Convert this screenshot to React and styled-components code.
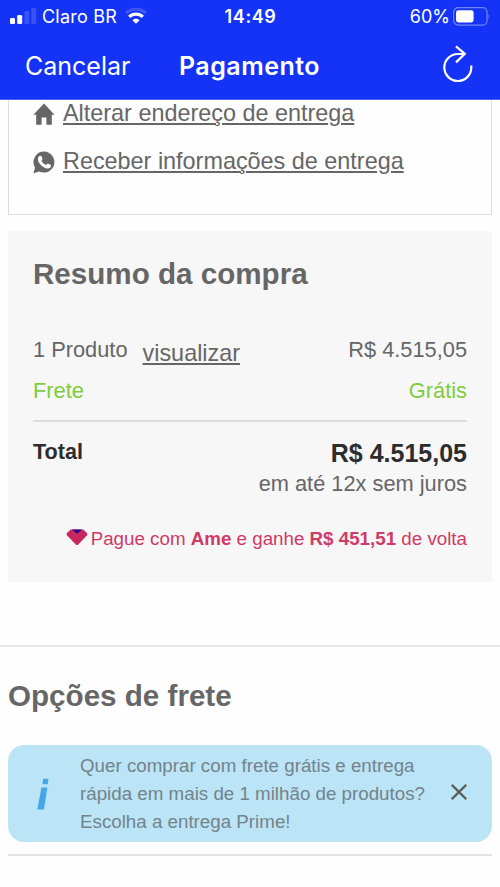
import React from 'react';
import styled, { createGlobalStyle } from 'styled-components';

const GlobalStyle = createGlobalStyle`
  * {
    box-sizing: border-box;
  }

  body {
    margin: 0;
    background: #fff;
    font-family: 'Liberation Sans', Arial, sans-serif;
    color: #666;
  }

  h2, p {
    margin: 0;
  }
`;

const SignalIcon = () => (
  <svg width="27" height="17" viewBox="0 0 27 17" fill="#fff">
    <rect x="0" y="10" width="5" height="6" rx="1.2" />
    <rect x="7.2" y="7" width="5" height="9" rx="1.2" />
    <rect x="14.4" y="3" width="4.8" height="13" rx="1.2" opacity="0.16" />
    <rect x="21.4" y="0" width="4.8" height="16" rx="1.2" opacity="0.16" />
  </svg>
);

const WifiIcon = () => (
  <svg width="24" height="18" viewBox="0 0 24 18" fill="none" stroke="#fff">
    <path d="M2 6.2 A14.4 14.4 0 0 1 22 6.2" strokeWidth="3" opacity="0.18" />
    <path d="M5.2 9.8 A9.8 9.8 0 0 1 18.8 9.8" strokeWidth="3.2" />
    <path d="M8.4 13.2 A5.2 5.2 0 0 1 15.6 13.2 L12 16.8 Z" fill="#fff" stroke="none" />
  </svg>
);

const BatteryIcon = () => (
  <svg width="38" height="19" viewBox="0 0 38 19" fill="none">
    <rect x="0.7" y="0.7" width="33.4" height="17.4" rx="4.5" stroke="#fff" strokeWidth="1.2" opacity="0.4" />
    <rect x="3" y="3.2" width="17.6" height="12.2" rx="2.4" fill="#fff" />
    <path d="M35.6 6.8 Q37.4 9.4 35.6 12 Z" fill="#fff" opacity="0.5" />
  </svg>
);

const ReloadIcon = () => (
  <svg width="32" height="38" viewBox="0 0 32 38" fill="none" stroke="#fff" strokeWidth="2.2">
    <path d="M22.4 9 H15.8 A13.5 13.5 0 1 0 29.3 22.2 V20.6" />
    <path d="M14 1.4 L22.8 8.9 L14 17.4" />
  </svg>
);

const HouseIcon = () => (
  <svg width="22" height="23" viewBox="0 0 22 23" fill="#666">
    <path d="M11 0.5 L21.5 11.8 H18.8 V21.8 H13.4 V14.6 H8.6 V21.8 H3.2 V11.8 H0.4 Z" />
  </svg>
);

const WhatsappIcon = () => (
  <svg width="22" height="23" viewBox="0 0 22 23">
    <path d="M11.2 0.6 A10.5 10.5 0 1 1 6.2 20.5 L0.4 22.2 L2.1 16.6 A10.5 10.5 0 0 1 11.2 0.6 Z" fill="#666" />
    <path
      d="M6.8 4.8 C7.3 4.5 8 4.6 8.3 5.1 L9.5 7.7 C9.7 8.4 8.6 9.2 8.5 9.7 C9.4 11.7 11 13.2 13 14 C13.7 13.8 14.3 12.6 15 12.6 L17.7 14 C18.2 14.5 17.9 16 17.1 16.8 C15.7 18 13.2 17.6 10.7 16.2 C7.9 14.6 5.6 11.6 5 9.2 C4.6 7.2 5.4 5.6 6.8 4.8 Z"
      fill="#fff"
    />
  </svg>
);

const AmeIcon = () => (
  <svg width="22" height="17" viewBox="0 0 22 17">
    <path d="M4.8 0.5 H17.2 L21 4 Q21.9 5.2 20.9 6.4 L12.2 15.6 Q11 16.6 9.8 15.6 L1.1 6.4 Q0.1 5.2 1 4 Z" fill="#c6275f" />
    <path d="M6 0.5 H16 L11.9 4 Q11 4.8 10.1 4 Z" fill="#28058a" />
  </svg>
);

const InfoIcon = () => (
  <svg width="12" height="32" viewBox="0 0 12 32" fill="#43a7e8">
    <path d="M6.2 0.8 H11.4 L10.8 6.2 H5.4 Z" />
    <path d="M4.4 9.6 H10.4 L6.9 31.4 H0.3 Z" />
  </svg>
);

const CloseIcon = () => (
  <svg width="16" height="16" viewBox="0 0 16 16" stroke="#5c5f5e" strokeWidth="2.3">
    <path d="M0.8 0.8 L15.2 15.2 M15.2 0.8 L0.8 15.2" />
  </svg>
);

const App = () => (
  <Screen>
    <GlobalStyle />
    <Header>
      <StatusBar>
        <Carrier>
          <SignalIcon />
          <span>Claro BR</span>
          <WifiIcon />
        </Carrier>
        <Clock>14:49</Clock>
        <Battery>
          <span>60%</span>
          <BatteryIcon />
        </Battery>
      </StatusBar>
      <NavBar>
        <CancelButton>Cancelar</CancelButton>
        <NavTitle>Pagamento</NavTitle>
        <ReloadButton aria-label="Recarregar">
          <ReloadIcon />
        </ReloadButton>
      </NavBar>
    </Header>

    <AddressCard>
      <ActionRow>
        <HouseIcon />
        <ActionLink>Alterar endereço de entrega</ActionLink>
      </ActionRow>
      <ActionRow>
        <WhatsappIcon />
        <ActionLink>Receber informações de entrega</ActionLink>
      </ActionRow>
    </AddressCard>

    <Summary>
      <Heading>Resumo da compra</Heading>
      <ProductRow>
        <Product>
          <span>1 Produto</span>
          <ViewLink>visualizar</ViewLink>
        </Product>
        <span>R$ 4.515,05</span>
      </ProductRow>
      <ShippingRow>
        <span>Frete</span>
        <span>Grátis</span>
      </ShippingRow>
      <TotalRow>
        <TotalLabel>Total</TotalLabel>
        <TotalValue>R$ 4.515,05</TotalValue>
      </TotalRow>
      <Installments>em até 12x sem juros</Installments>
      <Cashback>
        <AmeIcon />
        <p>
          Pague com <b>Ame</b> e ganhe <b>R$ 451,51</b> de volta
        </p>
      </Cashback>
    </Summary>

    <Shipping>
      <Heading>Opções de frete</Heading>
      <PrimeBanner>
        <InfoIcon />
        <BannerText>
          Quer comprar com frete grátis e entrega
          <br />
          rápida em mais de 1 milhão de produtos?
          <br />
          Escolha a entrega Prime!
        </BannerText>
        <CloseButton aria-label="Fechar">
          <CloseIcon />
        </CloseButton>
      </PrimeBanner>
      <Divider />
    </Shipping>
  </Screen>
);

const Screen = styled.div`
  width: 500px;
  height: 887px;
  overflow: hidden;
  background: #fefefe;
`;

const Header = styled.header`
  height: 100px;
  background: #1433f6;
  border-bottom: 1px solid #4a60f0;
  color: #fff;
  font-family: Inter, sans-serif;
`;

const StatusBar = styled.div`
  display: grid;
  grid-template-columns: 1fr auto 1fr;
  align-items: center;
  height: 32px;
  padding: 0 9px 0 10px;
  font-size: 18px;
`;

const Carrier = styled.div`
  display: flex;
  align-items: center;
  gap: 5px;
  letter-spacing: 0.2px;

  svg:last-child {
    margin-left: 2px;
  }
`;

const Clock = styled.div`
  font-weight: 600;
  letter-spacing: 0.6px;
`;

const Battery = styled.div`
  display: flex;
  align-items: center;
  justify-content: flex-end;
  gap: 3px;
`;

const NavBar = styled.div`
  display: grid;
  grid-template-columns: 1fr auto 1fr;
  align-items: center;
  height: 67px;
  padding: 0 26px 0 25px;
  font-size: 25px;
`;

const CancelButton = styled.button`
  justify-self: start;
  padding: 0;
  border: 0;
  background: none;
  color: inherit;
  font: inherit;
`;

const NavTitle = styled.div`
  font-weight: 600;
  letter-spacing: 0.5px;
`;

const ReloadButton = styled(CancelButton)`
  justify-self: end;
  height: 38px;
  margin-top: -4px;
`;

const AddressCard = styled.section`
  display: flex;
  flex-direction: column;
  gap: 21px;
  height: 115px;
  margin: 0 8px;
  padding-left: 24px;
  border: 1px solid #dcdcdc;
  border-top: 0;
`;

const ActionRow = styled.div`
  display: flex;
  align-items: center;
  gap: 8px;
  height: 27px;

  svg {
    margin-top: 2px;
  }
`;

const ActionLink = styled.a`
  font-size: 23.4px;
  line-height: 27px;
  text-decoration: underline;
  text-decoration-thickness: 1.5px;
  text-underline-offset: 2px;
`;

const Summary = styled.section`
  height: 351px;
  margin: 16px 8px 0;
  padding: 26px 25px 0;
  background: #f7f7f7;
  font-size: 21.8px;
`;

const Heading = styled.h2`
  font-size: 29.6px;
  line-height: 34px;
  font-weight: bold;
  color: #666;
`;

const Row = styled.div`
  display: flex;
  justify-content: space-between;
`;

const ProductRow = styled(Row)`
  margin-top: 46px;
  line-height: 26px;
`;

const Product = styled.div`
  display: flex;
  gap: 15px;
`;

const ViewLink = styled.a`
  margin-top: 3px;
  font-size: 23.4px;
  line-height: 26px;
  text-decoration: underline;
  text-decoration-thickness: 1.5px;
  text-underline-offset: 2px;
`;

const ShippingRow = styled(Row)`
  height: 44px;
  margin-top: 12px;
  border-bottom: 2px solid #dedede;
  line-height: 26px;
  color: #7fcc3e;
`;

const TotalRow = styled(Row)`
  margin-top: 16px;
  font-weight: bold;
  color: #2d2d2d;
`;

const TotalLabel = styled.span`
  line-height: 27px;
  font-size: 21.6px;
`;

const TotalValue = styled.span`
  font-size: 25px;
  line-height: 31px;
`;

const Installments = styled.p`
  margin-top: 2px;
  line-height: 26px;
  text-align: right;
`;

const Cashback = styled.div`
  display: flex;
  align-items: center;
  justify-content: flex-end;
  gap: 3px;
  margin-top: 30px;
  font-size: 18.75px;
  line-height: 24px;
  color: #d13a66;

  svg {
    margin-top: -4px;
  }
`;

const Shipping = styled.section`
  margin-top: 63px;
  padding: 32px 8px 0;
  border-top: 2px solid #e6e6e6;
`;

const PrimeBanner = styled.div`
  display: flex;
  align-items: center;
  height: 97px;
  margin-top: 32px;
  padding: 0 25px 0 29px;
  border-radius: 16px;
  background: #bbe4f6;
`;

const BannerText = styled.p`
  flex: 1;
  margin: 1px 0 0 31px;
  font-size: 18.75px;
  line-height: 28px;
  color: #73838b;
  white-space: nowrap;
`;

const CloseButton = styled.button`
  display: flex;
  margin-top: -4px;
  padding: 0;
  border: 0;
  background: none;
`;

const Divider = styled.div`
  height: 2px;
  margin-top: 12px;
  background: #e4e4e4;
`;

export default App;
